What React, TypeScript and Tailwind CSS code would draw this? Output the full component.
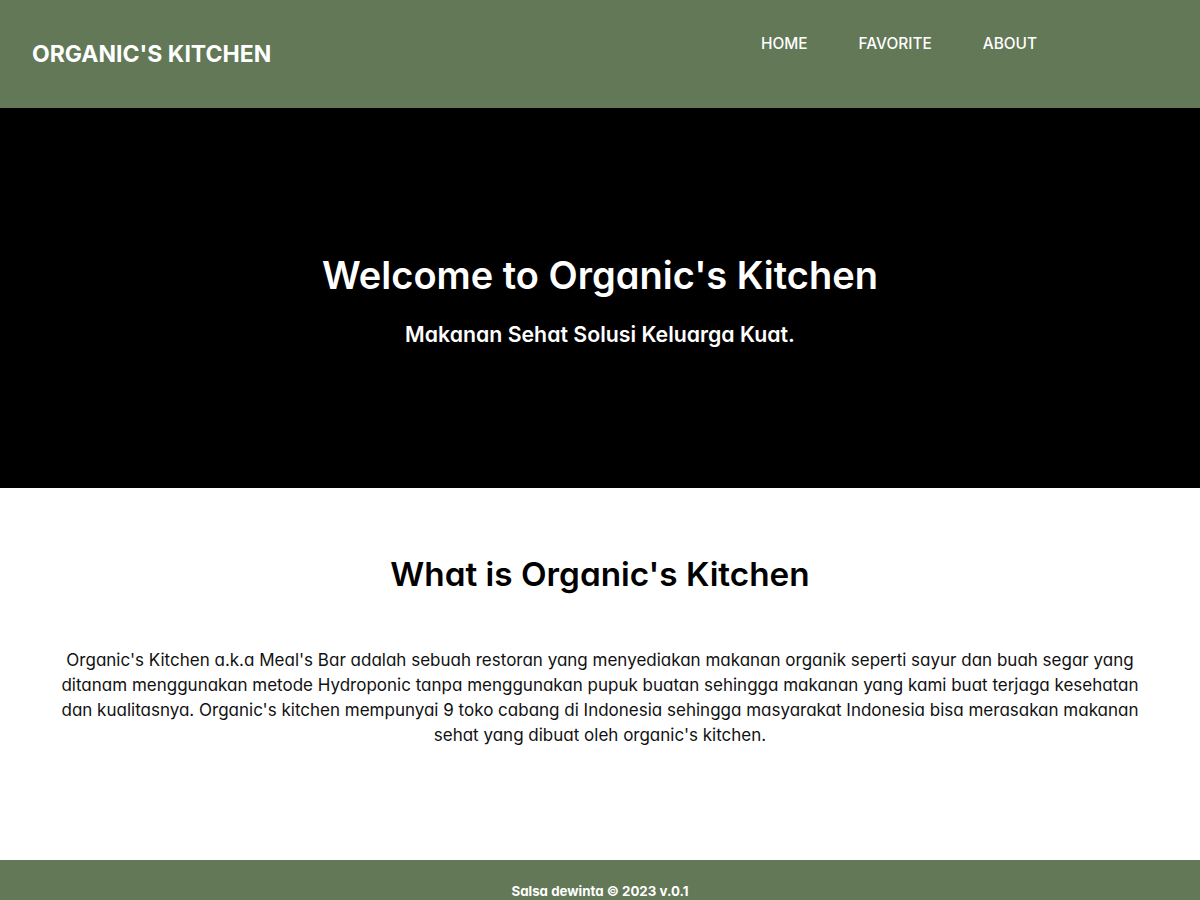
const navItems = ['HOME', 'FAVORITE', 'ABOUT'];

export default function App() {
  return (
    <div className="min-h-screen bg-white text-black font-['Inter','Noto_Sans',sans-serif] [font-feature-settings:'cv11']">
      <header className="flex h-[108px] items-start justify-between bg-[#627857] pl-8 pr-[163px]">
        <h1 className="mt-[40px] text-[23px] font-bold leading-[28px] text-white">
          ORGANIC'S KITCHEN
        </h1>
        <nav className="mt-[31px]">
          <ul className="flex gap-[51px]">
            {navItems.map((item) => (
              <li key={item}>
                <a href="#" className="text-[15.4px] font-medium leading-6 text-white">
                  {item}
                </a>
              </li>
            ))}
          </ul>
        </nav>
      </header>

      <section className="flex h-[380px] flex-col items-center bg-black pt-[145px] text-white">
        <h2 className="text-[38px] font-semibold leading-[44px]">
          Welcome to Organic's Kitchen
        </h2>
        <p className="mt-[23px] text-[21.3px] font-semibold leading-7">
          Makanan Sehat Solusi Keluarga Kuat.
        </p>
      </section>

      <section className="px-[45px] pb-[112px] pt-[66px] text-center">
        <h2 className="text-[33.3px] font-semibold leading-10">What is Organic's Kitchen</h2>
        <p className="mx-auto mt-[54px] max-w-[1093px] text-[17px] leading-[25px] text-[#111]">
          Organic's Kitchen a.k.a Meal's Bar adalah sebuah restoran yang menyediakan makanan
          organik seperti sayur dan buah segar yang ditanam menggunakan metode Hydroponic tanpa
          menggunakan pupuk buatan sehingga makanan yang kami buat terjaga kesehatan dan
          kualitasnya. Organic's kitchen mempunyai 9 toko cabang di Indonesia sehingga masyarakat
          Indonesia bisa merasakan makanan sehat yang dibuat oleh organic's kitchen.
        </p>
      </section>

      <footer className="h-[80px] bg-[#627857] pt-[22px] text-center">
        <p className="text-[13.3px] font-bold leading-[18px] text-white">
          Salsa dewinta © 2023 v.0.1
        </p>
      </footer>
    </div>
  );
}
